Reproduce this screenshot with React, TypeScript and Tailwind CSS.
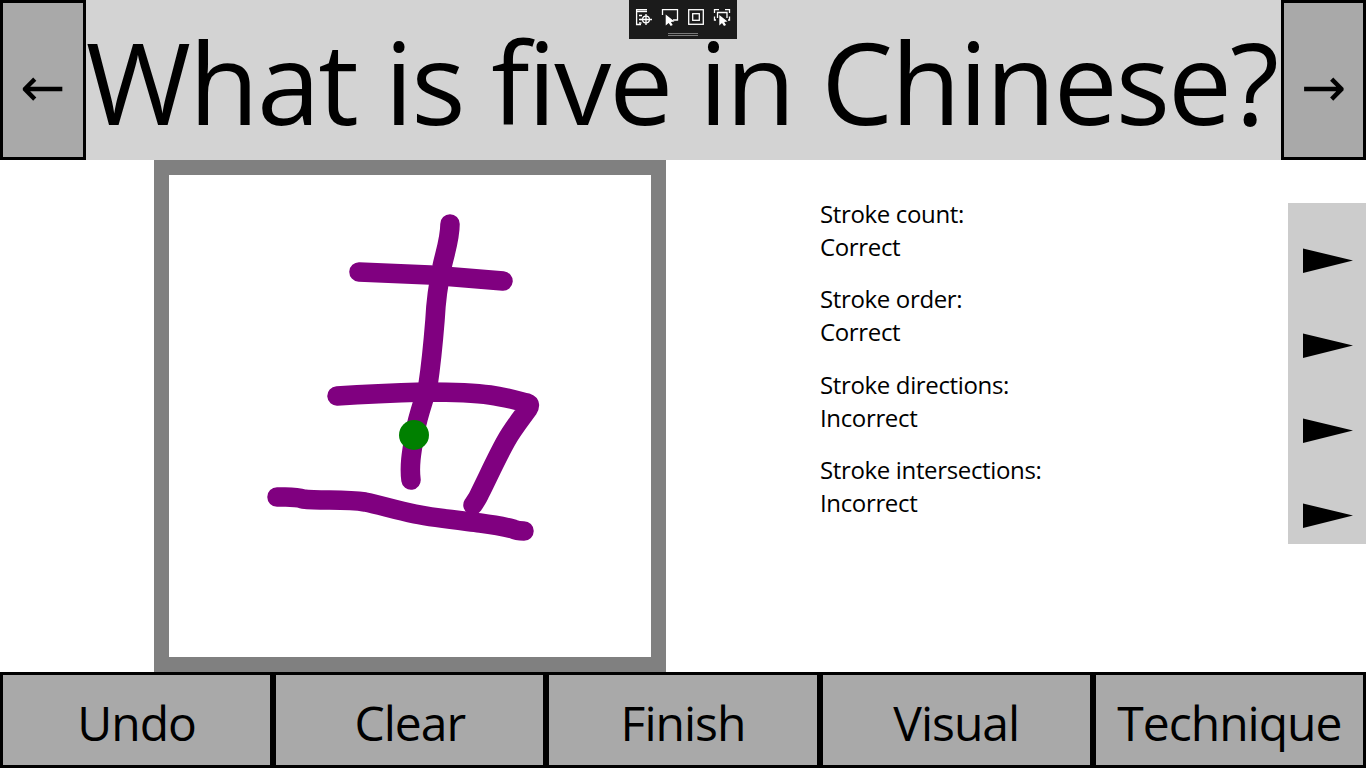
const font = { fontFamily: '"Open Sans", "Noto Sans", "DejaVu Sans", sans-serif' };
const arrowFont = { fontFamily: '"DejaVu Sans", sans-serif' };

const results = [
  { label: "Stroke count:", value: "Correct" },
  { label: "Stroke order:", value: "Correct" },
  { label: "Stroke directions:", value: "Incorrect" },
  { label: "Stroke intersections:", value: "Incorrect" },
];

const actions = ["Undo", "Clear", "Finish", "Visual", "Technique"];

const strokes = [
  "M450 224 C450 240 444 256 442 267 C438 285 436 300 435 320 C433 345 431 365 428 385 C424 400 418 415 415 432 C412 450 409 465 411 480",
  "M359 272 L430 275 L503 281",
  "M337 396 C370 394 395 393 425 392 C450 392 470 392 490 395 C505 397 515 400 527 403 C530 404 530 406 528 409 C520 420 512 430 506 441 C497 457 488 477 480 493 C478 498 475 502 473 505",
  "M277 497 C285 497 295 496 303 499 C320 501 345 499 365 502 C380 505 395 510 415 514 C435 518 455 520 480 523 C495 525 505 527 513 529 C517 531 521 531 524 531",
];

function Toolbar() {
  return (
    <div className="absolute top-0 left-[629px] w-[108px] h-[39px] bg-[#1b1b1b] flex flex-col items-center">
      <svg width="108" height="28" viewBox="0 0 108 28" fill="none" stroke="white" strokeWidth="1.3">
        <path d="M18 9.6H7.6V24.5H12" />
        <path d="M7.6 11.4H18" strokeWidth="1.6" />
        <path d="M10 15.5H13M10 19.5H12.5M10 23H12.5" />
        <circle cx="17" cy="19.5" r="3.4" />
        <path d="M17 14V25M11.5 19.5H23" />
        <path d="M33.5 15V9.6H48.5V20H44" />
        <path d="M36.7 14.5V25.5L39.7 23L41.7 26L43.7 25L41.9 22L45.5 21.6Z" fill="white" stroke="none" />
        <rect x="59.7" y="9.7" width="14.6" height="14.6" />
        <rect x="63.7" y="13.7" width="6.6" height="6.6" />
        <path d="M85.5 13V9.6H90M96 9.6H100.5V13M100.5 16.5V20H99M85.5 16.5V20H87" />
        <path d="M88.5 18V12.5H98V18" />
        <path d="M90.3 15V25.5L93 23L95 26L97 25L95.2 22L98.5 21.6Z" fill="white" stroke="none" />
      </svg>
      <div className="mt-[5px] w-[30px] h-[1px] bg-[#7a7a7a]" />
      <div className="mt-[1px] w-[30px] h-[1px] bg-[#7a7a7a]" />
    </div>
  );
}

function Triangle() {
  return (
    <svg width="50" height="26" viewBox="0 0 50 26">
      <polygon points="0,0.5 50,12.5 0,25" fill="black" />
    </svg>
  );
}

export default function App() {
  return (
    <div className="relative w-[1366px] h-[768px] overflow-hidden bg-white text-black flex flex-col" style={font}>
      <div className="h-[160px] flex bg-[#d3d3d3]">
        <button className="w-[86px] border-[3px] border-black bg-[#a9a9a9] text-[54px] leading-none pt-[16px]" style={arrowFont}>
          ←
        </button>
        <div className="flex-1 flex items-center justify-center whitespace-nowrap text-[114px] tracking-[-2px] leading-none pt-[2px] pr-[4px]">
          What is five in Chinese?
        </div>
        <button className="w-[85px] border-[3px] border-black bg-[#a9a9a9] text-[54px] leading-none pt-[16px]" style={arrowFont}>
          →
        </button>
      </div>

      <div className="h-[512px] flex">
        <div className="ml-[154px] w-[512px] h-[512px] border-[15px] border-[#808080] bg-white">
          <svg width="482" height="482" viewBox="169 175 482 482" fill="none">
            {strokes.map((d) => (
              <path key={d} d={d} stroke="#800080" strokeWidth="19.5" strokeLinecap="round" strokeLinejoin="round" />
            ))}
            <circle cx="414" cy="435" r="15" fill="#008000" />
          </svg>
        </div>

        <div className="ml-[154px] pt-[37px] w-[468px] text-[24px] leading-[33px] tracking-[-0.35px]">
          {results.map((r) => (
            <div key={r.label} className="h-[85.33px]">
              <div>{r.label}</div>
              <div>{r.value}</div>
            </div>
          ))}
        </div>

        <div className="mt-[43px] w-[78px] h-[341px] bg-[#cccccc] grid grid-rows-4">
          {results.map((r) => (
            <div key={r.label} className="flex items-center pl-[15px] pt-[30px]">
              <Triangle />
            </div>
          ))}
        </div>
      </div>

      <div className="h-[96px] grid grid-cols-5">
        {actions.map((a) => (
          <button key={a} className="border-[3px] border-black bg-[#a9a9a9] text-[48px] tracking-[-1px] leading-none pt-[5px]">
            {a}
          </button>
        ))}
      </div>

      <Toolbar />
    </div>
  );
}
